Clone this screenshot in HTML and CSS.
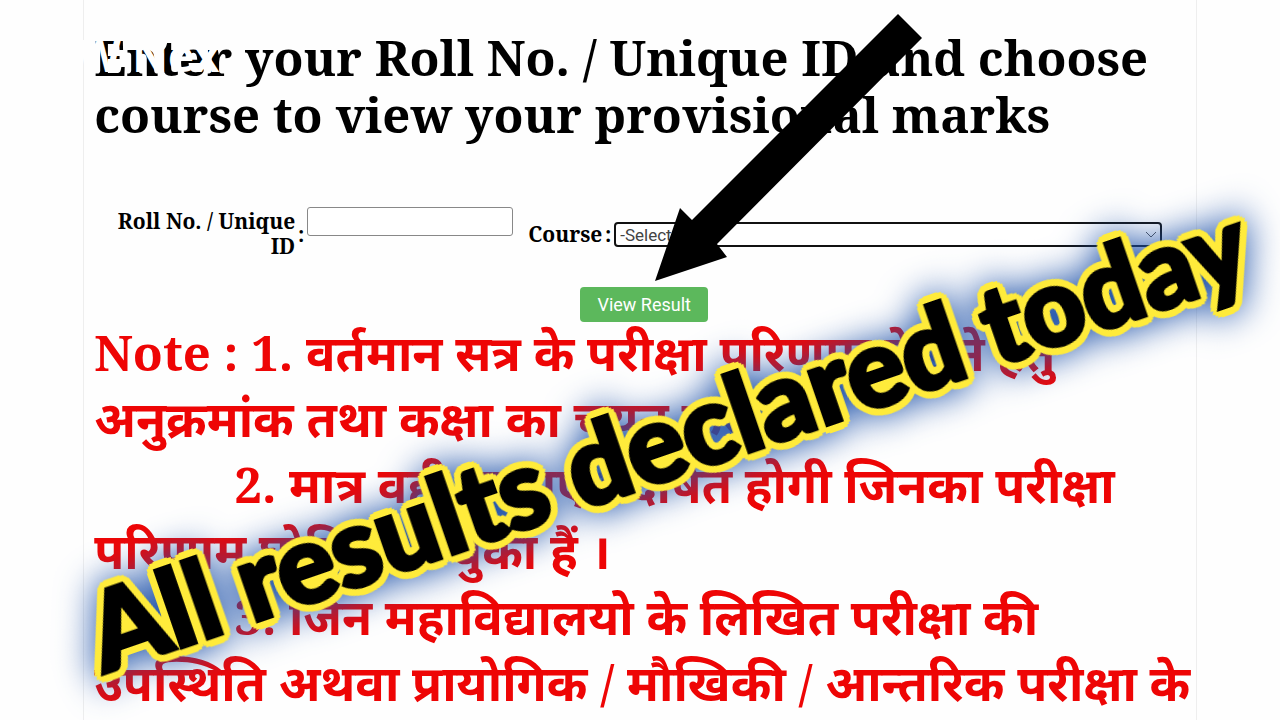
FILE: index.html
```html
<!DOCTYPE html>
<html lang="hi">
<head>
  <meta charset="UTF-8">
  <meta name="viewport" content="width=device-width, initial-scale=1">
  <title>View Result</title>
  <link rel="stylesheet" href="styles.css">
</head>
<body>
  <main class="page">
    <h1>Enter your Roll No. / Unique ID and choose course to view your provisional marks</h1>
    <span class="watermark">W Nex</span>

    <form class="result-form">
      <div class="fields">
        <label class="roll-label" for="roll">Roll No. / Unique ID</label>
        <span class="colon">:</span>
        <input type="text" id="roll">
        <label class="course-label" for="course">Course</label>
        <span class="colon">:</span>
        <div class="select-wrap">
          <select id="course">
            <option>-Select-</option>
          </select>
          <svg class="chevron" viewBox="0 0 12 8"><path d="M1 1l5 5 5-5"/></svg>
        </div>
      </div>
      <button type="button" class="view-btn">View Result</button>
    </form>

    <div class="note">
      <p>Note : 1. वर्तमान सत्र के परीक्षा परिणाम देखने हेतु अनुक्रमांक तथा कक्षा का चयन करें ।</p>
      <p class="item">2. मात्र वही कक्षाए प्रदर्षित होगी जिनका परीक्षा परिणाम घोषित हो चुका हैं ।</p>
      <p class="item">3. जिन महाविद्यालयो के लिखित परीक्षा की उपस्थिति अथवा प्रायोगिक / मौखिकी / आन्तरिक परीक्षा के अंक विश्वविद्यालय में प्राप्त नहीं हुए हैं</p>
    </div>
  </main>

  <svg class="arrow" viewBox="0 0 268 268"><path d="M243 0L267 24 62 230 72 243 0 267 25 194 37 206z"/></svg>
  <div class="banner">All results declared today</div>
</body>
</html>
```

FILE: styles.css
```css
* {
  box-sizing: border-box;
}

body {
  margin: 0;
  height: 100vh;
  overflow: hidden;
  position: relative;
  background-color: #fefefe;
  font-family: "Noto Serif", "Noto Sans Devanagari", "DejaVu Serif", serif;
}

.page {
  position: relative;
  width: 87%;
  height: 100vh;
  margin: 0 auto;
  padding: 29px 0 0 10px;
  border-left: 1px solid #eee;
  border-right: 1px solid #eee;
}

h1 {
  margin: 0;
  font-size: 49px;
  line-height: 57px;
  font-weight: bold;
  color: #000;
}

.watermark {
  position: absolute;
  left: -6px;
  top: 30px;
  font: bold 44px/50px "Open Sans", sans-serif;
  color: #fefefe;
}

.result-form {
  padding-top: 64px;
}

.fields {
  display: flex;
  padding-right: 34px;
  font-size: 21px;
  line-height: 25px;
  font-weight: bold;
}

.roll-label {
  width: 201px;
  padding-top: 2px;
  text-align: right;
}

.colon {
  width: 12px;
  padding-top: 15px;
  text-align: center;
}

#roll {
  width: 206px;
  height: 29px;
  border: 1px solid #888;
  border-radius: 3px;
  background-color: #fff;
}

.course-label {
  margin-left: 15px;
  padding-top: 15px;
}

.select-wrap {
  position: relative;
  flex: 1;
  padding-top: 15px;
}

#course {
  display: block;
  width: 100%;
  height: 25px;
  padding: 0 4px;
  appearance: none;
  border: 2px solid #111;
  border-radius: 4px;
  background-color: #fff;
  font: 17px Roboto, sans-serif;
  color: #444;
}

.chevron {
  position: absolute;
  right: 5px;
  top: 24px;
  width: 12px;
  height: 8px;
  fill: none;
  stroke: #555;
  stroke-width: 1;
}

.view-btn {
  display: block;
  width: 128px;
  height: 35px;
  margin: 28px 0 0 486px;
  border: 0;
  border-radius: 4px;
  background-color: #5cb85c;
  color: #fff;
  font: 18px Roboto, sans-serif;
}

.note {
  margin-top: -3px;
  color: #ee0505;
  font-size: 49px;
  line-height: 66px;
  font-weight: bold;
}

.note p {
  margin: 0;
}

.note .item {
  text-indent: 140px;
}

.arrow {
  position: absolute;
  left: 655px;
  top: 14px;
  width: 268px;
  height: 268px;
}

.banner {
  position: absolute;
  left: 110px;
  top: 571px;
  white-space: nowrap;
  font: 900 108px/120px Lato, sans-serif;
  color: #000;
  -webkit-text-stroke: 4px #000;
  text-shadow:
    9px 0 #ffeb3b, 8px 4px #ffeb3b, 6px 6px #ffeb3b, 4px 8px #ffeb3b,
    0 9px #ffeb3b, -4px 8px #ffeb3b, -6px 6px #ffeb3b, -8px 4px #ffeb3b,
    -9px 0 #ffeb3b, -8px -4px #ffeb3b, -6px -6px #ffeb3b, -4px -8px #ffeb3b,
    0 -9px #ffeb3b, 4px -8px #ffeb3b, 6px -6px #ffeb3b, 8px -4px #ffeb3b;
  filter: drop-shadow(0 0 18px #1c50a8);
  transform: rotate(-19deg);
  transform-origin: 0 100%;
}
```
